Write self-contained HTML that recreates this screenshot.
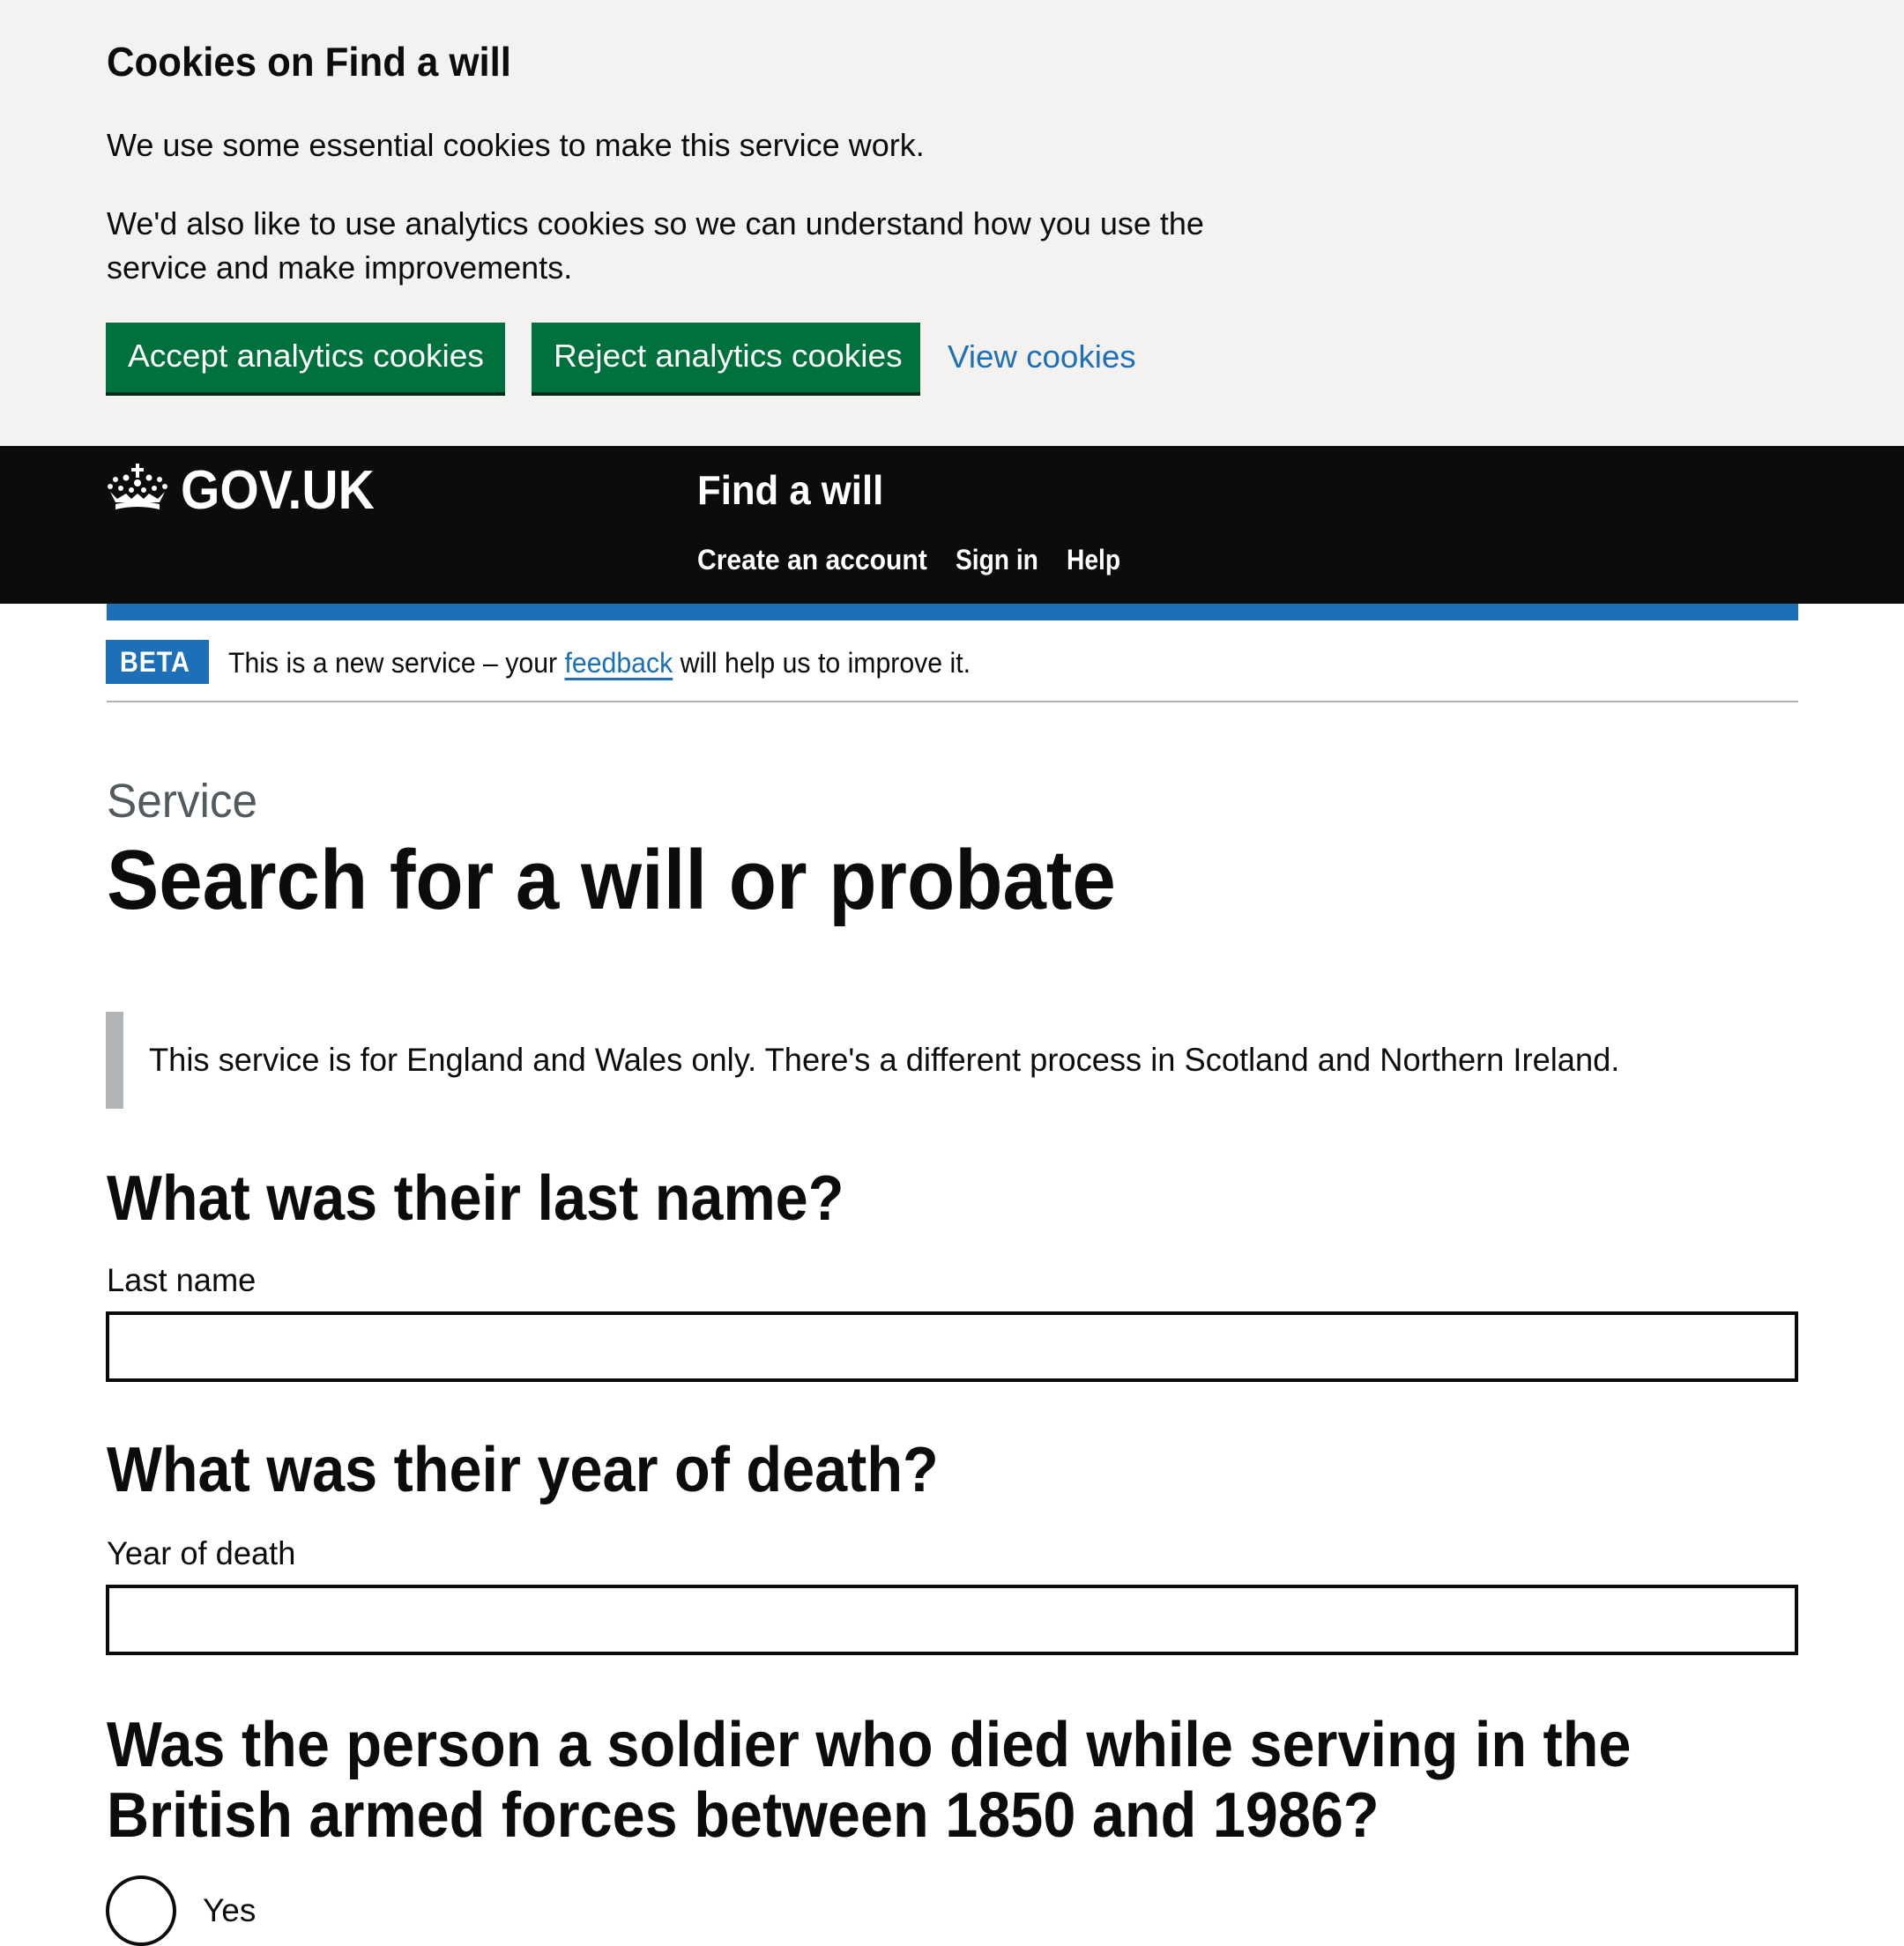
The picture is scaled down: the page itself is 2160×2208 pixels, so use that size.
<!DOCTYPE html>
<html><head><meta charset="utf-8"><style>
*{margin:0;padding:0;box-sizing:border-box}
body{width:2160px;height:2160px;overflow:hidden;background:#fff;font-family:"Liberation Sans",Arial,sans-serif;color:#0b0c0c;position:relative}
.a{position:absolute;white-space:nowrap}
.s{display:inline-block;transform-origin:left center}
.b{font-weight:bold}
a{color:#1d70b8;text-decoration:underline;text-decoration-thickness:3px;text-underline-offset:6px}
</style></head><body>
<div class="a" style="left:0;top:0;width:2160px;height:506px;background:#f3f2f1"></div>
<div class="a b" style="left:121px;top:42px;font-size:46px;line-height:56px"><span class="s" style="transform:scaleX(.95)">Cookies on Find a will</span></div>
<div class="a" style="left:121px;top:143px;font-size:36px;line-height:44px"><span class="s">We use some essential cookies to make this service work.</span></div>
<div class="a" style="left:121px;top:229px;font-size:36px;line-height:50px"><span class="s">We'd also like to use analytics cookies so we can understand how you use the</span><br><span class="s">service and make improvements.</span></div>
<div class="a" style="left:120px;top:366px;width:453px;height:79px;background:#00703c;box-shadow:0 4px 0 #002d18;color:#fff;font-size:36px;line-height:76px;padding-left:25px"><span class="s" style="transform:scaleX(1.03)">Accept analytics cookies</span></div>
<div class="a" style="left:603px;top:366px;width:441px;height:79px;background:#00703c;box-shadow:0 4px 0 #002d18;color:#fff;font-size:36px;line-height:76px;padding-left:25px"><span class="s" style="transform:scaleX(1.03)">Reject analytics cookies</span></div>
<div class="a" style="left:1075px;top:383px;font-size:36px;line-height:44px"><a><span class="s" style="transform:scaleX(1.02)">View cookies</span></a></div>

<div class="a" style="left:0;top:506px;width:2160px;height:179px;background:#0b0c0c"></div>
<svg class="a" style="left:121px;top:526px" width="70" height="54" viewBox="0 0 70 54" fill="#fff">
<rect x="33" y="0" width="4" height="16"/><rect x="28" y="5" width="14" height="4"/>
<circle cx="35" cy="22" r="4"/><circle cx="22" cy="16" r="3.5"/><circle cx="48" cy="16" r="3.5"/>
<circle cx="10" cy="18" r="3"/><circle cx="60" cy="18" r="3"/><circle cx="4" cy="26" r="3"/><circle cx="66" cy="26" r="3"/>
<circle cx="16" cy="28" r="3"/><circle cx="54" cy="28" r="3"/><circle cx="28" cy="30" r="3"/><circle cx="42" cy="30" r="3"/>
<path d="M4 32 L10 44 L60 44 L66 32 L58 40 L48 34 L42 40 L35 34 L28 40 L22 34 L12 40 Z"/>
<path d="M10 46 Q35 40 60 46 L60 52 Q35 46 10 52 Z"/>
</svg>
<div class="a b" style="left:205px;top:522px;font-size:62px;line-height:70px;color:#fff"><span class="s" style="transform:scaleX(.92)">GOV.UK</span></div>
<div class="a b" style="left:791px;top:528px;font-size:46px;line-height:56px;color:#fff"><span class="s" style="transform:scaleX(.95)">Find a will</span></div>
<div class="a b" style="left:791px;top:615px;font-size:32px;line-height:40px;color:#fff"><span class="s" style="transform:scaleX(.94)">Create an account</span></div>
<div class="a b" style="left:1084px;top:615px;font-size:32px;line-height:40px;color:#fff"><span class="s" style="transform:scaleX(.88)">Sign in</span></div>
<div class="a b" style="left:1210px;top:615px;font-size:32px;line-height:40px;color:#fff"><span class="s" style="transform:scaleX(.88)">Help</span></div>
<div class="a" style="left:121px;top:685px;width:1919px;height:19px;background:#1d70b8"></div>

<div class="a b" style="left:120px;top:726px;width:117px;height:50px;background:#1d70b8;color:#fff;font-size:32px;line-height:50px;padding-left:16px;letter-spacing:1px"><span class="s" style="transform:scaleX(.9)">BETA</span></div>
<div class="a" style="left:259px;top:732px;font-size:32px;line-height:40px"><span class="s" style="transform:scaleX(.945)">This is a new service – your <a>feedback</a> will help us to improve it.</span></div>
<div class="a" style="left:121px;top:795px;width:1919px;height:2px;background:#b1b4b6"></div>

<div class="a" style="left:121px;top:879px;font-size:54px;line-height:60px;color:#505a5f"><span class="s" style="transform:scaleX(.95)">Service</span></div>
<div class="a b" style="left:121px;top:947px;font-size:96px;line-height:104px"><span class="s" style="transform:scaleX(.925)">Search for a will or probate</span></div>

<div class="a" style="left:120px;top:1148px;width:20px;height:110px;background:#b1b4b6"></div>
<div class="a" style="left:169px;top:1181px;font-size:37px;line-height:44px"><span class="s" style="transform:scaleX(.98)">This service is for England and Wales only. There's a different process in Scotland and Northern Ireland.</span></div>

<div class="a b" style="left:121px;top:1320px;font-size:72px;line-height:80px"><span class="s" style="transform:scaleX(.925)">What was their last name?</span></div>
<div class="a" style="left:121px;top:1431px;font-size:37px;line-height:44px"><span class="s" style="transform:scaleX(.98)">Last name</span></div>
<div class="a" style="left:120px;top:1488px;width:1920px;height:80px;border:4px solid #0b0c0c"></div>

<div class="a b" style="left:121px;top:1628px;font-size:72px;line-height:80px"><span class="s" style="transform:scaleX(.925)">What was their year of death?</span></div>
<div class="a" style="left:121px;top:1741px;font-size:37px;line-height:44px"><span class="s" style="transform:scaleX(.98)">Year of death</span></div>
<div class="a" style="left:120px;top:1798px;width:1920px;height:80px;border:4px solid #0b0c0c"></div>

<div class="a b" style="left:121px;top:1940px;font-size:72px;line-height:80px"><span class="s" style="transform:scaleX(.925)">Was the person a soldier who died while serving in the</span><br><span class="s" style="transform:scaleX(.925)">British armed forces between 1850 and 1986?</span></div>
<div class="a" style="left:120px;top:2128px;width:80px;height:80px;border:4px solid #0b0c0c;border-radius:50%"></div>
<div class="a" style="left:230px;top:2146px;font-size:37px;line-height:44px">Yes</div>
</body></html>
